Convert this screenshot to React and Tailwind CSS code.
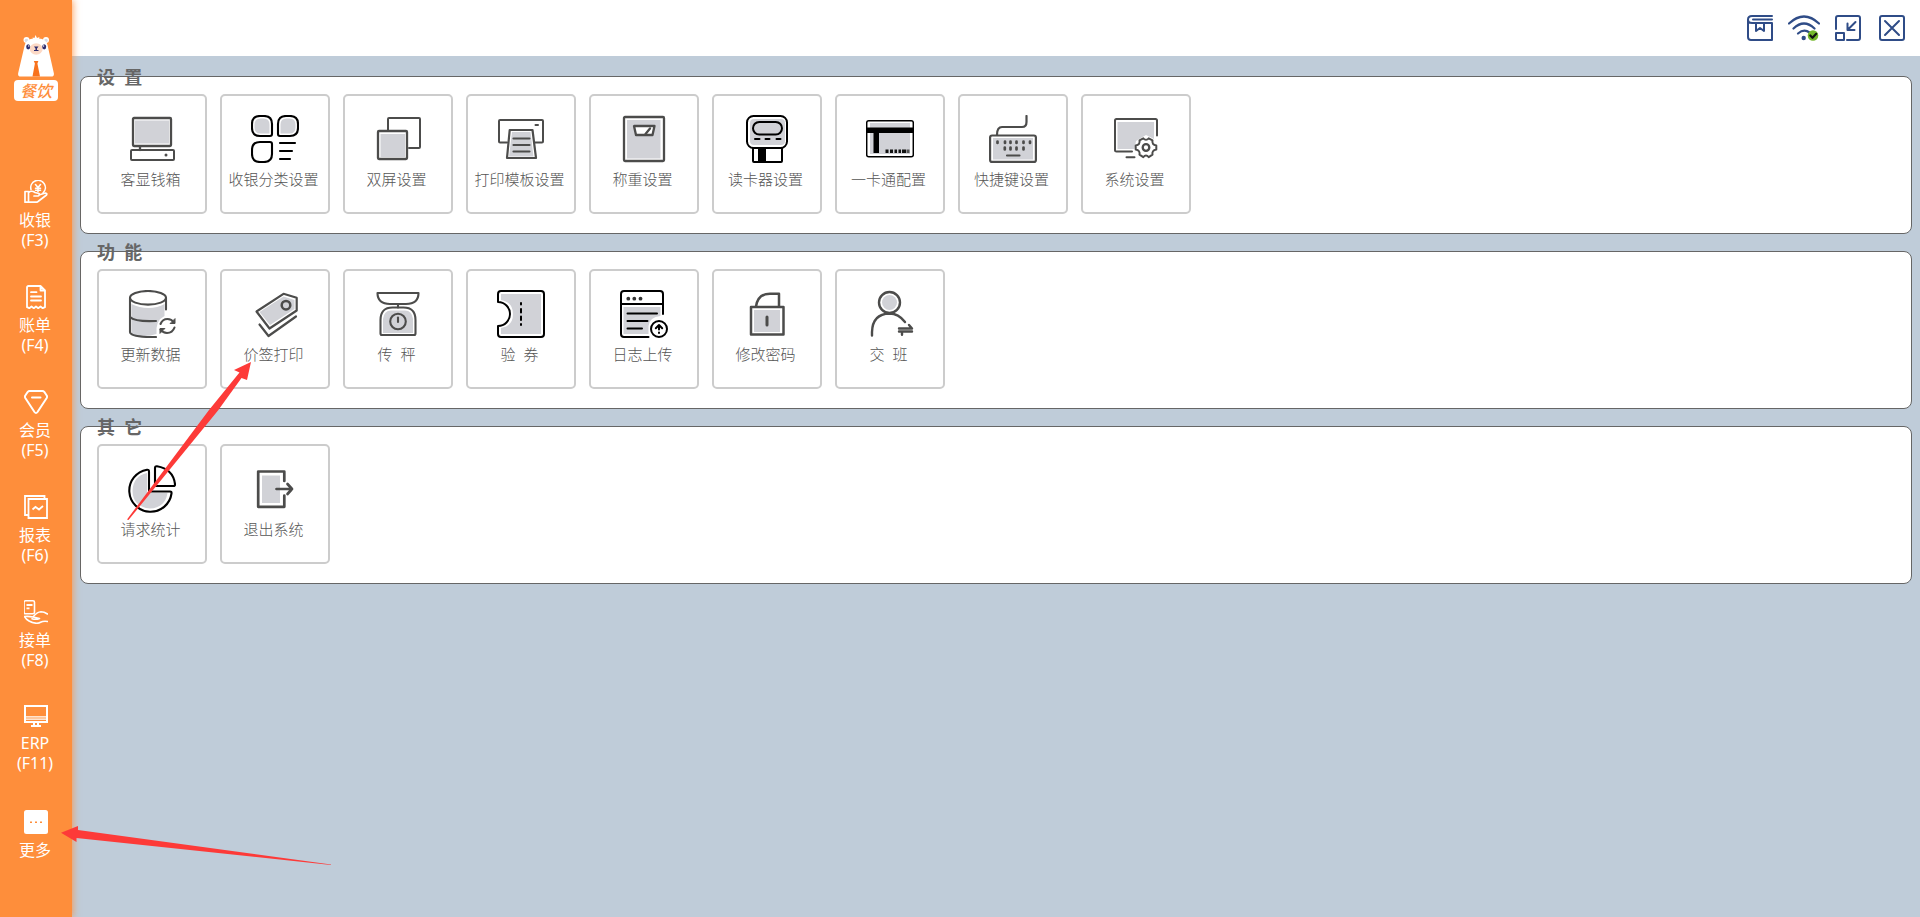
import React from "react";

const GREY = "#4c4c4b";
const TINT = "#d1d2d7";

function TileIcon({ color = GREY, width = 2.3, children }) {
  return (
    <svg viewBox="0 0 48 48" className="size-12 shrink-0" fill="none" stroke={color} strokeWidth={width} strokeLinecap="round" strokeLinejoin="round" aria-hidden="true">
      {children}
    </svg>
  );
}

const Tint = ({ d }) => <path d={d} fill={TINT} stroke="none" />;

const CashBoxIcon = () => (
  <TileIcon>
    <Tint d="M7 5.5h34v23H7z" />
    <rect x="5" y="3" width="38" height="28" rx="1" />
    <path d="M12 32v3" />
    <rect x="3" y="35" width="43" height="10" rx="1" strokeWidth="2" />
    <circle cx="38" cy="40" r="1.5" fill={GREY} stroke="none" />
  </TileIcon>
);

const CategoryIcon = () => (
  <TileIcon color="#000" width={2.1}>
    <Tint d="M9.500 3.500h3q6 0 6 6v9h-9q-6 0-6-6v-3q0-6 6-6zM35.500 3.500h3q6 0 6 6v3q0 6-6 6h-9v-9q0-6 6-6z" />
    <path d="M9 1h4q8 0 8 8v10q0 2-2 2H9q-8 0-8-8V9q0-8 8-8zM35 1h4q8 0 8 8v4q0 8-8 8H29q-2 0-2-2V9q0-8 8-8zM9 27h10q2 0 2 2v10q0 8-8 8H9q-8 0-8-8v-4q0-8 8-8z" />
    <path d="M29 28h15M29 36h12M29 44h10" />
  </TileIcon>
);

const DualScreenIcon = () => (
  <TileIcon>
    <path d="M14 15V4q0-1 1-1h30q1 0 1 1v28q0 1-1 1H35" strokeWidth="2" />
    <Tint d="M6.500 19h24.500v23H6.500z" />
    <rect x="4" y="16" width="29" height="28" rx="1" />
  </TileIcon>
);

const PrinterIcon = () => (
  <TileIcon width={2.200}>
    <path d="M10 27.500H3q-1 0-1-1V6q0-1 1-1h42q1 0 1 1v20.500q0 1-1 1H38M38.500 10H41" strokeWidth="2" />
    <Tint d="M15 17h18.500l3 24.500h-24.500z" />
    <path d="M12.700 15h22.800l3.500 28H10zM16.500 23.500h16M16.500 30h16M16.500 36.500h16" />
  </TileIcon>
);

const WeighIcon = () => (
  <TileIcon>
    <Tint d="M7 5h33.500v38.500H7z" />
    <rect x="4" y="2" width="40" height="44" rx="1" />
    <path d="M14 11h20.500l-2 9H16z" fill="#fff" />
    <path d="M25.500 19l4.500-5.500" />
  </TileIcon>
);

const CardReaderIcon = () => (
  <TileIcon color="#000" width={2}>
    <rect x="7" y="4" width="35" height="26" rx="4" fill={TINT} stroke="none" />
    <rect x="4" y="1" width="40" height="32" rx="6.500" />
    <rect x="10" y="7" width="29" height="12.500" rx="6.250" />
    <path d="M12 24h4.500M22.500 24h4M33.500 24h4M10 33v13q0 1 1 1h27q1 0 1-1V33" />
    <path d="M15 33h8v14h-8z" fill="#000" stroke="none" />
  </TileIcon>
);

const OneCardIcon = () => (
  <TileIcon color="#000" width={1.5}>
    <Tint d="M4 8h40v31H4z" />
    <rect x=".7" y="5.700" width="46.600" height="36" rx="2" />
    <path d="M0 12.500h48V18H0zM7.500 18H13v20H7.500z" fill="#000" stroke="none" />
    <path d="M19.500 34.500h3V38h-3zM24 34.500h3V38h-3zM28.500 34.500h2.500V38h-2.500zM32.500 34.500h2.500V38h-2.500zM36 34.500h4V38h-4z" fill="#111" stroke="none" />
    <path d="M40.500 34.500h3V38h-3z" fill="#555" stroke="none" />
  </TileIcon>
);

const KeyboardIcon = () => (
  <TileIcon width={2.200}>
    <Tint d="M4 23h40v21.500H4z" />
    <rect x="1.100" y="20.500" width="45.800" height="26.400" rx="2" />
    <path d="M8 20q0-8 5-8h20q4.500 0 4.500-5V1M18 40.500h12.500" />
    <path d="M8.500 26.500v1.500M16 26.500v1.500M21.500 26.500v1.500M27.500 26.500v1.500M34.500 26.500v1.500M41 26.500v1.500M15.800 32.500v2M21.500 32.500v2M27.500 32.500v2M34.500 32.500v2" strokeWidth="2.700" />
  </TileIcon>
);

const SystemIcon = () => (
  <TileIcon width={2}>
    <Tint d="M5.500 7H42v17l-8-4-10 6-1.500 8h-17z" />
    <path d="M45 20.500V5.500q0-1.500-1.500-1.500H4.500Q3 4 3 5.500v30Q3 36.500 4.500 36.500h15.500M14.500 42.300h8" />
    <path d="M31.300 23.300q2.700 3 5.400 0l3.800 2q-.9 4.500 3.800 5.200v4q-4.700.9-3.800 5.200l-3.800 2.400q-2.700-3-5.400 0l-3.800-2.400q.9-4.300-3.800-5.200v-4q4.700-.7 3.800-5.200z" fill="#fff" />
    <circle cx="34" cy="32.500" r="3.300" strokeWidth="2.300" />
  </TileIcon>
);

const DatabaseIcon = () => (
  <TileIcon width={2.100}>
    <Tint d="M3.500 14q8 4 17 4t16-4v12q-9 4-8 18-12 4-25 0z" />
    <ellipse cx="20" cy="7.800" rx="18" ry="6.800" fill="#fff" />
    <path d="M2 8v34q0 4 17 5h9M38 8v11.500M2 27q5 5 26 4" />
    <path d="M32.500 34q2-5 7-5 4 0 6.500 3.500M46.500 37.500q-2 5.500-7.500 5.500-4 0-6.500-3.500" />
    <path d="M47 29v4.500h-4.500zM32 43v-4.500h4.500z" fill={GREY} strokeWidth="1" />
  </TileIcon>
);

const PriceTagIcon = () => (
  <TileIcon width={2.200}>
    <Tint d="M32.500 6.500l11 3.500v9L19 35 8.500 22z" />
    <path d="M32.500 3.800L45.700 7.800V20.500L18.500 38.500 5.500 21.500z" />
    <circle cx="35" cy="15.200" r="4.300" strokeWidth="2.500" />
    <path d="M8.500 34.500l9 11.500L45 26.500" />
  </TileIcon>
);

const ScaleIcon = () => (
  <TileIcon width={2.100}>
    <path d="M3.500 3h41q0 11-12.500 11H16q-12.500 0-12.500-11zM24 14v3.500" />
    <Tint d="M9 43V29q1-8.500 8-8.500h14q7 0 8 8.500v14z" />
    <path d="M6.500 30q0-12.500 12-12.500h11q12 0 12 12.500v13.500q0 1.500-1.500 1.500H8q-1.500 0-1.500-1.500z" />
    <circle cx="24" cy="31.500" r="7.800" />
    <path d="M24 27.500v4.500" />
  </TileIcon>
);

const CouponIcon = () => (
  <TileIcon color="#000" width={2}>
    <Tint d="M4 4h40v40H4v-6q12-2 12-14T4 10z" />
    <path d="M1 12V4q0-3 3-3h40q3 0 3 3v40q0 3-3 3H4q-3 0-3-3v-8a12 12 0 0 0 0-24z" />
    <path d="M24 13v1.500M24 19v3.500M24 26.500v3.500M24 34v1" />
  </TileIcon>
);

const LogUploadIcon = () => (
  <TileIcon color="#000" width={2}>
    <Tint d="M3.500 17h37v9q-11 1-12 10v8h-25z" />
    <path d="M43 24V4q0-3-3-3H4Q1 1 1 4v40q0 3 3 3h24.500M1 14h42M7.500 23.500H37M7.500 31h20M7.500 38.500H22" />
    <g fill="#333" stroke="none">
      <circle cx="8.300" cy="8.700" r="1.900" />
      <circle cx="14.300" cy="8.700" r="1.900" />
      <circle cx="20.500" cy="8.700" r="1.900" />
    </g>
    <circle cx="39" cy="39" r="8" fill="#fff" />
    <path d="M39 39.500V35M35.800 38.200L39 35l3.200 3.200M39 42.500v.5" />
  </TileIcon>
);

const LockIcon = () => (
  <TileIcon width={2.500}>
    <Tint d="M11 20h26v22H11z" />
    <path d="M8 17h32.500v27.500H8z" />
    <path d="M24 27v8" strokeWidth="3" />
    <path d="M13 16.500Q15 3.700 27 3.700h9v13" />
  </TileIcon>
);

const ShiftIcon = () => (
  <TileIcon width={2.400}>
    <circle cx="23.500" cy="12.500" r="7.500" fill={TINT} stroke="none" />
    <circle cx="23.500" cy="12.500" r="10.500" />
    <path d="M6 45.500V42Q6.500 24 23.500 23.500q9 0 15.500 8.500M33 38.500h13l-3-3.500M46 41.500H33M36 44.800V41.500" />
  </TileIcon>
);

const PieIcon = () => (
  <TileIcon color="#000" width={2.100}>
    <Tint d="M19 8v20h20.500Q37 43 22 43.500 5 42 4.500 26 5 11 19 8z" />
    <path d="M19 4.700q2-.2 2 1.800V25q0 1.500 1.500 1.500H42q1.800 0 1.500 2A21.200 21.200 0 1 1 19 4.700z" />
    <path d="M27 3q0-2 2-1.700Q45 4 47 19q.3 2-1.700 2H28.500q-1.500 0-1.500-1.500z" />
  </TileIcon>
);

const ExitIcon = () => (
  <TileIcon width={2.700}>
    <Tint d="M11 10.500h18V38H11z" />
    <path d="M33.300 16V6.500H7.200v35.300h26.100V30.500M25.500 24H41M36.500 19l4.500 5-4.500 5" />
  </TileIcon>
);

function NavIcon({ height = 24, children }) {
  return (
    <svg viewBox={`0 0 24 ${height}`} width="24" height={height} className="shrink-0" fill="none" stroke="#fff" strokeWidth="1.800" strokeLinecap="round" strokeLinejoin="round" aria-hidden="true">
      {children}
    </svg>
  );
}

const NAV = [
  {
    name: "收银", key: "(F3)",
    icon: (
      <NavIcon>
        <path d="M7 9.500a7.300 7.300 0 1 1 12 3.500M11.500 4.500l2.500 3 2.500-3M14 7.500v4M11.500 8.300h5M11.500 10.300h5" strokeWidth="1.600" />
        <path d="M1 11.500h3.500v10.700H1zM4.500 12.500q3-2.500 6.500 0l4 1q1 2-1 2.500H10M15 15l6.500-2q2 .5 1 2L14 21.500q-1 .7-2 .7H4.500" strokeWidth="1.700" />
      </NavIcon>
    ),
  },
  {
    name: "账单", key: "(F4)",
    icon: (
      <NavIcon>
        <path d="M16.500 1H4.500Q3 1 3 2.500v19.700l2.300 1 2.200-1.700 2.300 1.700L12 21.500l2.200 1.700 2.300-1.700 2.200 1.700 2.300-1V5.500zM16.500 1v4.500H21M7 7.200h5.500M7 11.500h10M7 15.500h10" />
      </NavIcon>
    ),
  },
  {
    name: "会员", key: "(F5)",
    icon: (
      <NavIcon>
        <path d="M5.500 1h13q1 0 1.700.8l2.500 3.700q.7 1.200 0 2.500L13.500 22q-1.500 2-3 0L1.300 8q-.7-1.300 0-2.500L3.800 1.800Q4.500 1 5.500 1zM8 7.500h8.500" strokeWidth="2" />
      </NavIcon>
    ),
  },
  {
    name: "报表", key: "(F6)",
    icon: (
      <NavIcon>
        <path d="M4.500 20H1V1h19.500v3M4.500 4H23v19H4.500zM8.500 14.500l3-2.500 3.500 2.500 4-3.500" strokeLinecap="butt" strokeLinejoin="miter" />
      </NavIcon>
    ),
  },
  {
    name: "接单", key: "(F8)",
    icon: (
      <NavIcon>
        <rect x="0" y=".8" width="10.500" height="13" rx="1.500" strokeWidth="1.600" />
        <path d="M2.500 5h6M2.500 8.300h3" strokeLinecap="butt" />
        <path d="M.5 16.500q4-.5 8.500.5 4-5 8-5.200 3 0 6.500 2.200M.5 16.500q1 2.500 4.500 4.500t7.500 2.300q2 0 4-1 3-1.500 7-.8M9 17l6.500 1.500Q12 20 8 18.700" strokeWidth="1.600" />
      </NavIcon>
    ),
  },
  {
    name: "ERP", key: "(F11)",
    icon: (
      <NavIcon height={22}>
        <path d="M1 1h22v16H1z" strokeWidth="2" strokeLinejoin="miter" />
        <path d="M1 11.800h22M1 14.200h22" strokeWidth="1.200" />
        <path d="M10 18v3M14 18v3M7 21h10" strokeLinecap="butt" strokeWidth="2" />
      </NavIcon>
    ),
  },
  {
    name: "更多",
    icon: (
      <NavIcon>
        <rect width="24" height="24" rx="2.500" fill="#fff" stroke="none" />
        <path d="M6 11.500h2v1.500H6zM11 11.500h2v1.500h-2zM16 11.500h2v1.500h-2z" fill="#fe8e3b" stroke="none" />
      </NavIcon>
    ),
  },
];

const GROUPS = [
  {
    title: "设  置",
    tiles: [
      ["客显钱箱", CashBoxIcon], ["收银分类设置", CategoryIcon], ["双屏设置", DualScreenIcon],
      ["打印模板设置", PrinterIcon], ["称重设置", WeighIcon], ["读卡器设置", CardReaderIcon],
      ["一卡通配置", OneCardIcon], ["快捷键设置", KeyboardIcon], ["系统设置", SystemIcon],
    ],
  },
  {
    title: "功  能",
    tiles: [
      ["更新数据", DatabaseIcon], ["价签打印", PriceTagIcon], ["传  秤", ScaleIcon], ["验  券", CouponIcon],
      ["日志上传", LogUploadIcon], ["修改密码", LockIcon], ["交  班", ShiftIcon],
    ],
  },
  { title: "其  它", tiles: [["请求统计", PieIcon], ["退出系统", ExitIcon]] },
];

const WINDOW_ACTIONS = [
  {
    label: "手册",
    icon: <path d="M28 4H8Q4 4 4 7.500V25q0 3 3 3h21V11H8Q4 11 4 7.500M28 7.500H9M12 11v8l4-3 4 3v-8" />,
  },
  {
    label: "网络状态",
    icon: (
      <>
        <path d="M1 11.500q15-14 30 0M5.500 16.500q10.500-10 21 0M10 21.500q6-5 11.500-1" strokeWidth="2.200" />
        <circle cx="15.700" cy="26" r="2.200" fill="#2f4c87" stroke="none" />
        <circle cx="25" cy="23.500" r="5.300" fill="#74b72d" stroke="none" />
        <path d="M22.300 23.500l2.200 2.300 3.700-4" stroke="#111" strokeWidth="2.200" />
      </>
    ),
  },
  {
    label: "缩小窗口",
    icon: <path d="M4 17V6q0-2 2-2h20q2 0 2 2v20q0 2-2 2H15M4 21h8v7H5q-1 0-1-1zM23.500 10l-8 8M15.500 11.500V18H22.500" />,
  },
  {
    label: "关闭",
    icon: <path d="M6 4h20q2 0 2 2v20q0 2-2 2H6q-2 0-2-2V6q0-2 2-2zM9 9l14 14M23 9L9 23" />,
  },
];

function Logo() {
  return (
    <div className="flex flex-col items-center gap-[3px]">
      <svg viewBox="0 0 36 42" className="h-[42px] w-9" aria-hidden="true">
        <circle cx="8.500" cy="5" r="3" fill="#fff" />
        <circle cx="28" cy="5" r="3" fill="#fff" />
        <circle cx="8.500" cy="5.500" r="1.800" fill="#d9dde6" />
        <circle cx="28" cy="5.500" r="1.800" fill="#d9dde6" />
        <path d="M14.500 2.500l2 .5 1-3 1.500 3 2.500-1-.5 1.500Q28 4 29.500 10l6.300 28q.7 3.500-2.500 3.500H2.700Q-.5 41.500.2 38L6.500 11Q8 4 15 3.500z" fill="#fff" />
        <ellipse cx="18.200" cy="14" rx="6.500" ry="5.800" fill="#fcd9c6" />
        <ellipse cx="10.200" cy="11.800" rx="2" ry="2.600" fill="#2d2c6e" />
        <ellipse cx="26.200" cy="11.800" rx="2" ry="2.600" fill="#2d2c6e" />
        <circle cx="10.800" cy="11" r=".7" fill="#fff" />
        <circle cx="25.600" cy="11" r=".7" fill="#fff" />
        <path d="M16 11.500h4.500l-1.500 2v1.500h-1.500v-1.500zM16 15h4.500v1H16z" fill="#2d2c6e" />
        <path d="M15.800 26h4.600l-1 2.500L22 41.500h-7.500l2.400-13z" fill="#f8721d" />
      </svg>
      <span className="flex h-[21px] w-11 items-center justify-center rounded-sm bg-white text-base leading-5 font-medium text-[#fe8e3b] italic">餐饮</span>
    </div>
  );
}

export default function App() {
  return (
    <div className="relative flex min-h-screen bg-[#bfccd9] font-['Noto_Sans','Noto_Sans_CJK_SC',sans-serif]">
      <nav className="relative flex w-18 shrink-0 flex-col items-center bg-[#fe8e3b] pt-[35px] pb-14 shadow-[1px_0_7px_#fe8e3bcc]">
        <Logo />
        <ul className="mt-[79px] flex flex-col gap-[35px]">
          {NAV.map((item) => (
            <li key={item.name} className="min-h-[70px] last:min-h-0">
              <button type="button" className="flex w-18 flex-col items-center gap-1.5 text-base leading-5 text-white">
                {item.icon}
                <span className="flex flex-col items-center pr-0.5">
                  <span>{item.name}</span>
                  {item.key && <span>{item.key}</span>}
                </span>
              </button>
            </li>
          ))}
        </ul>
      </nav>

      <div className="flex min-w-0 flex-1 flex-col">
        <header className="flex h-14 items-center justify-end gap-3 bg-white pr-3">
          {WINDOW_ACTIONS.map((action) => (
            <button key={action.label} type="button" aria-label={action.label} className="size-8">
              <svg viewBox="0 0 32 32" className="size-8" fill="none" stroke="#2f4c87" strokeWidth="2" strokeLinecap="round" strokeLinejoin="round" aria-hidden="true">
                {action.icon}
              </svg>
            </button>
          ))}
        </header>

        <main className="flex flex-col gap-[17px] px-2 pt-5 pb-5">
          {GROUPS.map((group) => (
            <section key={group.title} className="rounded-lg border border-[#666] bg-white px-4 pb-[19px]">
              <h2 className="-mt-2.5 mb-[7px] text-lg leading-5 font-bold whitespace-pre text-[#666]">{group.title}</h2>
              <div className="flex flex-wrap gap-[13px]">
                {group.tiles.map(([label, Icon]) => (
                  <button key={label} type="button" className="flex h-[120px] w-[110px] flex-col items-center gap-1.5 rounded-[5px] border-2 border-[#ccc] bg-white pt-[19px]">
                    <Icon />
                    <span className="pr-[3px] text-[15px] leading-5 font-light whitespace-pre text-[#555]">{label}</span>
                  </button>
                ))}
              </div>
            </section>
          ))}
        </main>
      </div>

      <svg className="pointer-events-none absolute top-[362px] left-[126px] h-[160px] w-[125px]" viewBox="0 0 125 160" fill="#fd3a38" aria-hidden="true">
        <path d="M125 0L108 8l5.500 2.500L83 48 1 157.500l1.500 .5L92 48.500 115.500 16l5.500 2z" />
      </svg>
      <svg className="pointer-events-none absolute top-[826px] left-[61px] h-10 w-[270px]" viewBox="0 0 270 40" fill="#fd3a38" aria-hidden="true">
        <path d="M0 6.700L17 0v4l253 34.500v.5L15.500 12v4z" />
      </svg>
    </div>
  );
}
